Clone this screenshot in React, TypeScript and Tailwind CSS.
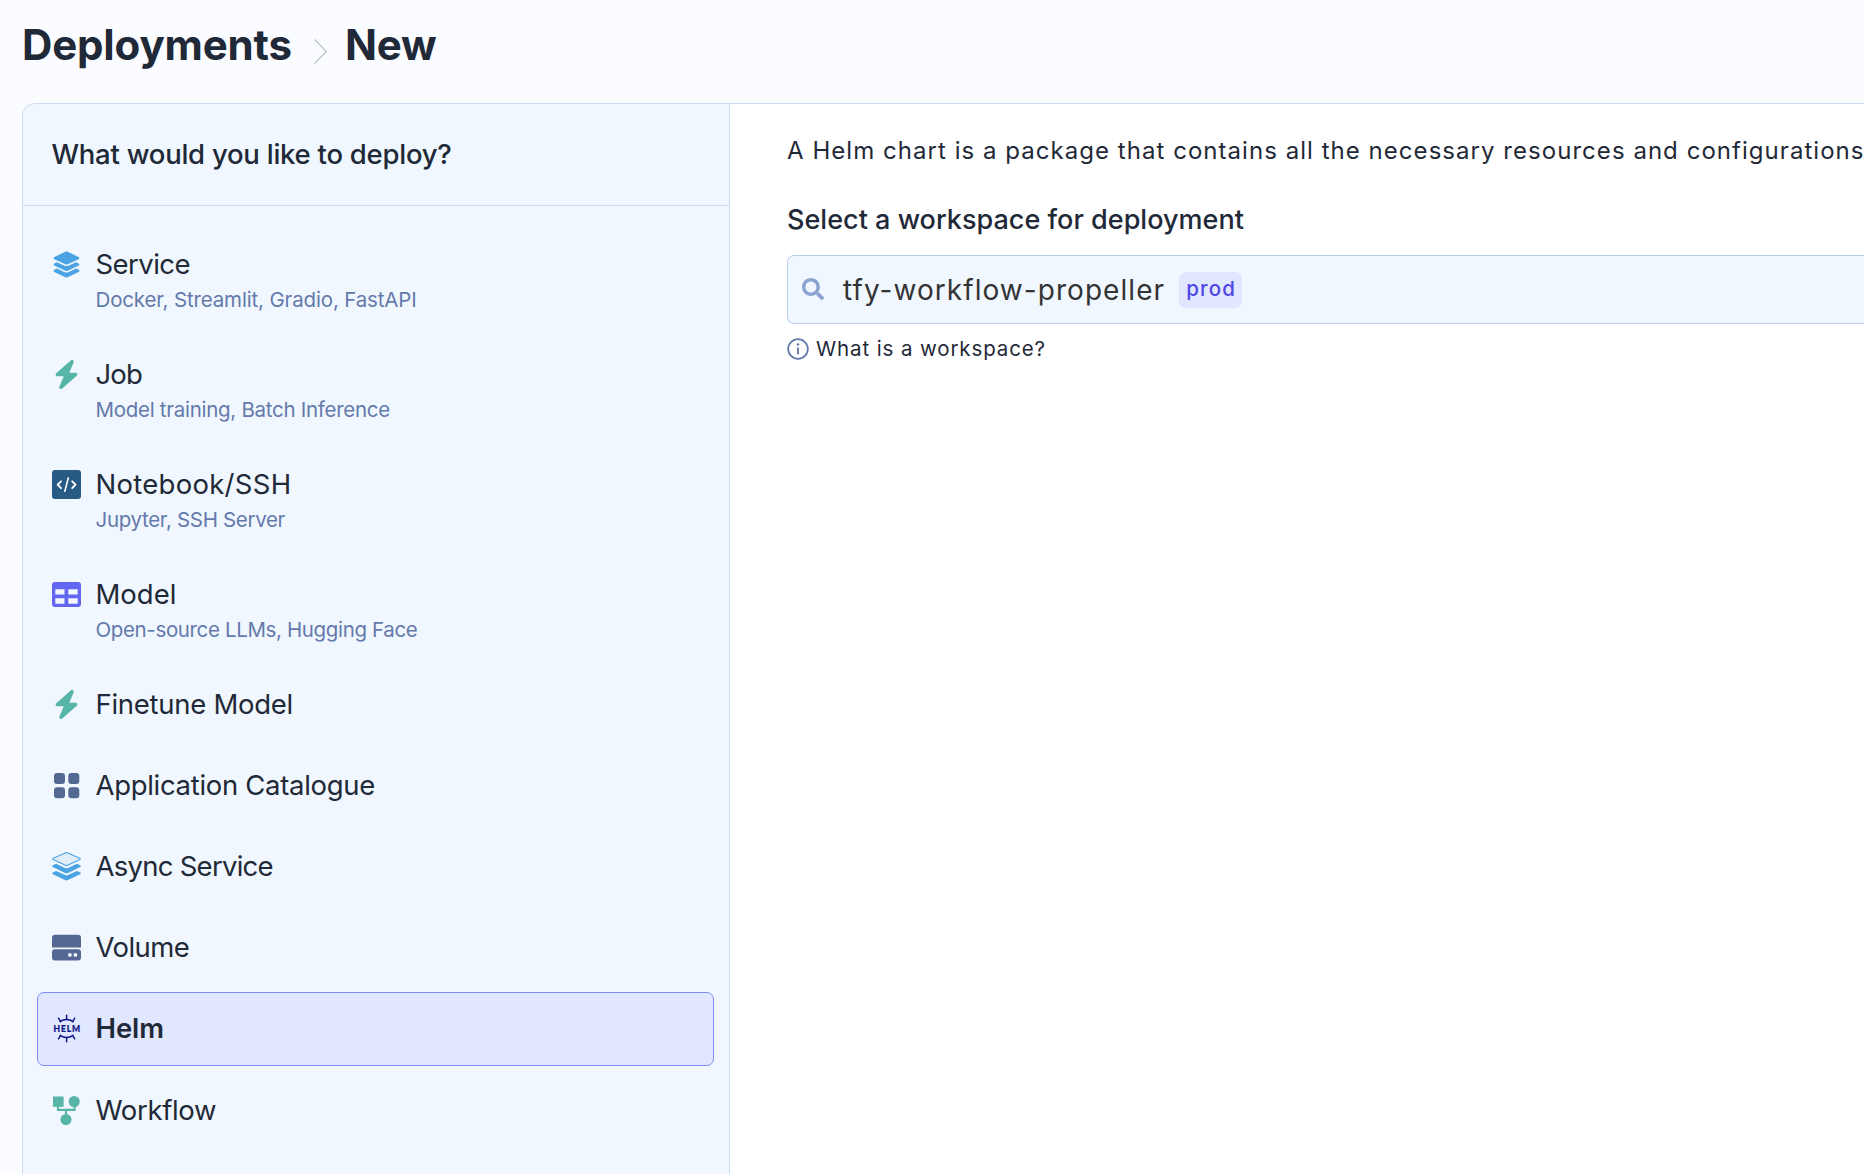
import type { ReactNode } from "react";
import { FaSearch } from "react-icons/fa";
import { FaBolt, FaLayerGroup } from "react-icons/fa6";

type Item = {
  label: string;
  tracking: string;
  hint?: string;
  hintTracking?: string;
  icon: ReactNode;
  active?: boolean;
};

const ServiceIcon = () => <FaLayerGroup className="size-[29px] text-[#4ba3e3]" />;

const BoltIcon = () => <FaBolt className="size-[29px] text-[#56b5a6]" />;

const NotebookIcon = () => (
  <svg viewBox="0 0 29 29" className="size-[29px]" fill="none">
    <rect width="29" height="29" rx="3" fill="#275a84" />
    <g stroke="#fff" strokeWidth="1.9" strokeLinecap="round" strokeLinejoin="round">
      <path d="M9 11.300 5.700 14.600l3.300 3.500" />
      <path d="m20.200 11.300 3.300 3.300-3.300 3.500" />
      <path d="m16.300 8-3.500 13.200" strokeWidth="1.600" />
    </g>
  </svg>
);

const ModelIcon = () => (
  <svg viewBox="0 0 29 29" className="size-[29px]">
    <path
      fill="#6366f1"
      fillRule="evenodd"
      d="M3 2h23a3 3 0 0 1 3 3v19a3 3 0 0 1-3 3H3a3 3 0 0 1-3-3V5a3 3 0 0 1 3-3Zm.3 7.2v5.2h9.2V9.200Zm13 0v5.200h9.400V9.200Zm-13 9v5.600h9.200v-5.600Zm13 0v5.600h9.400v-5.600Z"
    />
  </svg>
);

const CatalogueIcon = () => (
  <svg viewBox="0 0 29 29" className="size-[29px]" fill="#536892">
    <rect x="2" y="2" width="11" height="11" rx="3" />
    <rect x="16.300" y="2" width="11" height="11" rx="3" />
    <rect x="2" y="16.300" width="11" height="11" rx="3" />
    <rect x="16.300" y="16.300" width="11" height="11" rx="3" />
  </svg>
);

const AsyncIcon = () => (
  <svg viewBox="0 0 29 29" className="size-[29px]">
    <path
      d="M14.500.6 27.800 6.300q.9.600 0 1.200L14.500 13.700 1.200 7.500q-.9-.6 0-1.200Z"
      fill="#e1eefa"
      stroke="#4ba3e3"
      strokeWidth="1.100"
      strokeLinejoin="round"
    />
    <g fill="#4ba3e3">
      <path d="M.9 13.200 4 11.800l9 4.100q1.500.7 3 0l9-4.100 3.100 1.400q1.600.9 0 1.900L16 20.900q-1.500.7-3 0L.9 15.100q-1.600-1 0-1.900Z" />
      <path d="M.9 20.400 4 19l9 4.100q1.500.7 3 0l9-4.100 3.100 1.400q1.600.9 0 1.900L16 28.100q-1.500.7-3 0L.9 22.300q-1.600-1 0-1.900Z" />
    </g>
  </svg>
);

const VolumeIcon = () => (
  <svg viewBox="0 0 29 29" className="size-[29px]">
    <path d="M3 1.700h23a3 3 0 0 1 3 3v9.900H0V4.700a3 3 0 0 1 3-3Z" fill="#536892" />
    <rect y="16.200" width="29" height="11.300" rx="3" fill="#536892" />
    <circle cx="17.900" cy="21.900" r="1.900" fill="#f0f7ff" />
    <circle cx="23.400" cy="21.900" r="1.900" fill="#f0f7ff" />
  </svg>
);

const HelmIcon = () => (
  <svg viewBox="0 0 29 29" className="mt-px size-[29px]" fill="none">
    <g stroke="#0f1689" strokeWidth="1.500" strokeLinecap="round">
      <path d="M8.200 7.700a10.500 10.500 0 0 1 12.800 0M8.200 21.300a10.500 10.500 0 0 0 12.800 0" />
      <path d="M14.600 1.300v4M6.500 4.200 8.500 7.400M22.700 4.200l-2 3.200M14.600 23.700v4M6.500 24.800l2-3.200M22.700 24.800l-2-3.200" />
    </g>
    <text
      x="1.600"
      y="17.500"
      textLength="26.500"
      lengthAdjust="spacing"
      fill="#0f1689"
      stroke="#0f1689"
      strokeWidth=".2"
      className="font-['Lato',sans-serif] text-[8.500px] font-black"
    >
      HELM
    </text>
  </svg>
);

const WorkflowIcon = () => (
  <svg viewBox="0 0 29 29" className="size-[29px]" fill="#56b5a6">
    <rect x="1" y=".5" width="10.600" height="10.300" />
    <circle cx="22.200" cy="5.500" r="5.500" />
    <circle cx="14" cy="23.500" r="5.500" />
    <path d="M6 10v3.900h16.600V10M14 13.900V19" fill="none" stroke="#56b5a6" strokeWidth="2.100" />
  </svg>
);

const items: Item[] = [
  {
    label: "Service",
    tracking: "tracking-[-0.55px]",
    hint: "Docker, Streamlit, Gradio, FastAPI",
    hintTracking: "tracking-[-0.15px]",
    icon: <ServiceIcon />,
  },
  {
    label: "Job",
    tracking: "tracking-[-0.9px]",
    hint: "Model training, Batch Inference",
    hintTracking: "tracking-[-0.28px]",
    icon: <BoltIcon />,
  },
  {
    label: "Notebook/SSH",
    tracking: "tracking-[0.28px]",
    hint: "Jupyter, SSH Server",
    hintTracking: "tracking-[-0.32px]",
    icon: <NotebookIcon />,
  },
  {
    label: "Model",
    tracking: "tracking-[0px]",
    hint: "Open-source LLMs, Hugging Face",
    hintTracking: "tracking-[-0.36px]",
    icon: <ModelIcon />,
  },
  { label: "Finetune Model", tracking: "tracking-[-0.28px]", icon: <BoltIcon /> },
  { label: "Application Catalogue", tracking: "tracking-[-0.31px]", icon: <CatalogueIcon /> },
  { label: "Async Service", tracking: "tracking-[-0.74px]", icon: <AsyncIcon /> },
  { label: "Volume", tracking: "tracking-[-0.55px]", icon: <VolumeIcon /> },
  { label: "Helm", tracking: "tracking-[-0.1px]", icon: <HelmIcon />, active: true },
  { label: "Workflow", tracking: "tracking-[-0.35px]", icon: <WorkflowIcon /> },
];

function DeployOption({ item }: { item: Item }) {
  return (
    <li
      className={`flex gap-[14.5px] rounded-[7px] border px-3.5 ${
        item.hint ? "h-[103px]" : "h-[74px]"
      } ${
        item.active
          ? "mt-px border-[#818cf8] bg-[#e0e7ff] pt-[17px]"
          : "border-transparent pt-[18px]"
      }`}
    >
      <span className="flex h-9 shrink-0 items-center">{item.icon}</span>
      <div>
        <div
          className={`text-[27.5px] leading-9 whitespace-nowrap ${item.tracking} ${
            item.active ? "font-semibold" : ""
          }`}
        >
          {item.label}
        </div>
        {item.hint && (
          <div
            className={`mt-1 text-[20.5px] leading-7 whitespace-nowrap text-[#647aab] ${item.hintTracking}`}
          >
            {item.hint}
          </div>
        )}
      </div>
    </li>
  );
}

function Sidebar() {
  return (
    <aside className="w-[707px] shrink-0 border-r border-[#cfdcf0] bg-[#f0f7ff]">
      <h2 className="flex h-[102px] items-center border-b border-[#cfdcf0] pl-[28.5px] text-[27.5px] font-medium tracking-[-0.25px]">
        What would you like to deploy?
      </h2>
      <ul className="flex flex-col gap-[7px] pt-[21px] pr-[15px] pl-3.5">
        {items.map((item) => (
          <DeployOption key={item.label} item={item} />
        ))}
      </ul>
    </aside>
  );
}

function WorkspaceForm() {
  return (
    <main className="min-w-0 flex-1 overflow-hidden bg-white pt-[31px] pl-[57px] whitespace-nowrap">
      <p className="text-[24px] leading-8 tracking-[1.04px]">
        A Helm chart is a package that contains all the necessary resources and configurations
      </p>
      <h3 className="mt-[33px] text-[27px] leading-10 font-medium tracking-[0.02px]">
        Select a workspace for deployment
      </h3>
      <div className="mt-[15px] flex h-[69px] items-center rounded-l-[7px] border border-r-0 border-[#bccde8] bg-[#f0f7ff] pl-3.5">
        <FaSearch className="-mt-px size-[22px] text-[#8aa3d0]" />
        <span className="ml-[19px] text-[28px] tracking-[1.05px] text-[#333333]">
          tfy-workflow-propeller
        </span>
        <span className="ml-3.5 flex h-9 w-[63px] items-center justify-center rounded-[7px] bg-[#e0e7ff] pl-px text-[20.5px] font-medium tracking-[1.1px] text-[#4f46e5]">
          prod
        </span>
      </div>
      <div className="mt-[11px] flex items-center gap-[7px] text-[20.5px] leading-[28px] tracking-[0.88px]">
        <svg viewBox="0 0 21 21" className="size-[22px]" fill="none">
          <circle cx="10.500" cy="10.500" r="9.400" stroke="#647aab" strokeWidth="1.700" />
          <path d="M10.500 9v6.500" stroke="#647aab" strokeWidth="1.800" />
          <circle cx="10.500" cy="6.200" r="1.200" fill="#647aab" />
        </svg>
        What is a workspace?
      </div>
    </main>
  );
}

export default function App() {
  return (
    <div className="flex h-[1174px] w-[1864px] flex-col overflow-hidden bg-[#fbfcff] pl-[22px] font-['Inter',sans-serif] text-[#1f2937]">
      <header className="flex h-[103px] shrink-0 items-start pt-[18px] text-[42px] leading-[54px] font-bold">
        <span className="w-[269px] tracking-[-0.16px]">Deployments</span>
        <svg viewBox="0 0 14 25" className="mt-[21px] ml-[23px] h-[25px] w-3.5" fill="none">
          <path d="m.5.5 12 12-12 12" stroke="#b9bfca" strokeWidth="1.100" />
        </svg>
        <span className="ml-[17px] tracking-[-0.2px]">New</span>
      </header>
      <section className="flex min-h-0 flex-1 overflow-hidden rounded-tl-[14px] border-t border-l border-[#cfdcf0]">
        <Sidebar />
        <WorkspaceForm />
      </section>
    </div>
  );
}
